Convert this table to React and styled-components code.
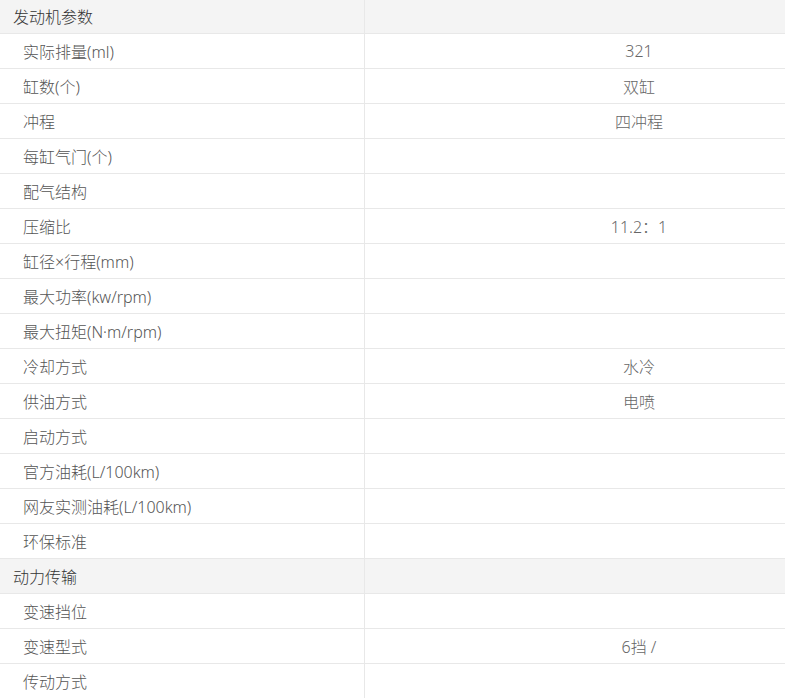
import React from "react";
import styled, { createGlobalStyle } from "styled-components";

const groups = [
    {
        title: "发动机参数",
        rows: [
            ["实际排量(ml)", "321"],
            ["缸数(个)", "双缸"],
            ["冲程", "四冲程"],
            ["每缸气门(个)", ""],
            ["配气结构", ""],
            ["压缩比", "11.2：1"],
            ["缸径×行程(mm)", ""],
            ["最大功率(kw/rpm)", ""],
            ["最大扭矩(N·m/rpm)", ""],
            ["冷却方式", "水冷"],
            ["供油方式", "电喷"],
            ["启动方式", ""],
            ["官方油耗(L/100km)", ""],
            ["网友实测油耗(L/100km)", ""],
            ["环保标准", ""]
        ]
    },
    {
        title: "动力传输",
        rows: [
            ["变速挡位", ""],
            ["变速型式", "6挡 /"],
            ["传动方式", ""]
        ]
    }
];

const Global = createGlobalStyle`
    body {
        margin: 0;
        background: #fff;
        overflow: hidden;
        font-family: "Noto Sans", "Noto Sans CJK SC", sans-serif;
    }
`;

const Table = styled.div`
    width: 100%;
    margin-top: -1px;
    display: grid;
    grid-template-columns: 365px 1fr;
`;

const Cell = styled.div`
    height: 35px;
    box-sizing: border-box;
    border-bottom: 1px solid #e8e8e8;
    border-right: ${p => (p.$first ? "1px solid #e8e8e8" : "none")};
    background: ${p => (p.$head ? "#f4f4f4" : "#fff")};
    display: flex;
    align-items: center;
    justify-content: ${p => (p.$value ? "center" : "flex-start")};
    padding-left: ${p => (p.$value ? "128px" : p.$head ? "13px" : "23px")};
    padding-bottom: 1px;
    font-size: 16px;
    font-weight: 300;
    color: ${p => (p.$head ? "#333" : p.$value ? "#666" : "#555")};
    white-space: nowrap;
`;

const App = () => {
    return (
        <>
            <Global />
            <Table>
                {groups.map(group => (
                    <React.Fragment key={group.title}>
                        <Cell $head $first>
                            {group.title}
                        </Cell>
                        <Cell $head $value />
                        {group.rows.map(([label, value]) => (
                            <React.Fragment key={label}>
                                <Cell $first>{label}</Cell>
                                <Cell $value>{value}</Cell>
                            </React.Fragment>
                        ))}
                    </React.Fragment>
                ))}
            </Table>
        </>
    );
};

export default App;
